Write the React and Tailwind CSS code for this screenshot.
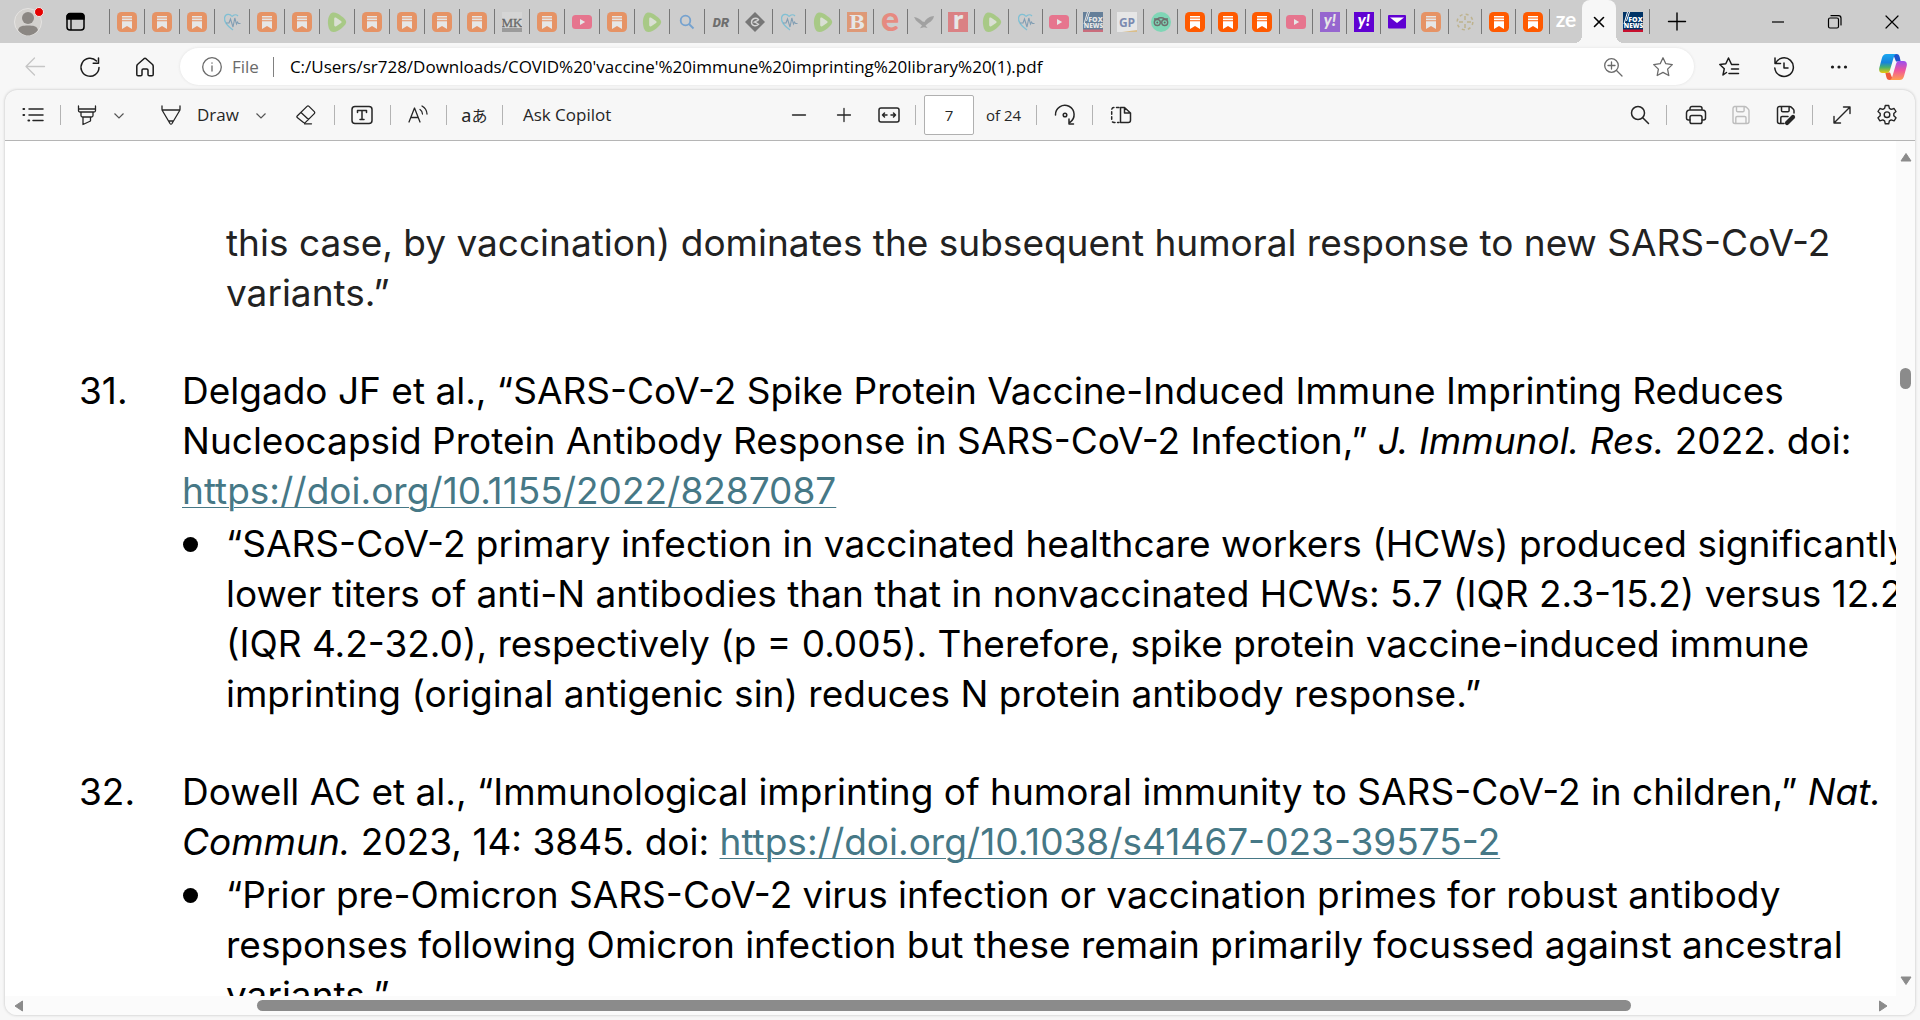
// ------------
// FAVICONS
// ------------

// orange bookmark favicon, used by most of the tabs
function BookmarkIcon() {
    return (
        <svg viewBox="0 0 20 20" className="w-5 h-5">
            <rect width="20" height="20" rx="4.5" fill="#ff5a00" />
            <path d="M5 4h10v1.6H5zM5 6.6h10v1.6H5zM5 9.2h10V17l-5-3-5 3z" fill="#fff" />
        </svg>
    )
}

function HeartIcon() {
    return (
        <svg viewBox="0 0 20 20" className="w-5 h-5" fill="none">
            <path d="M10 4.5C8 1.5 3.5 1.6 2.6 5.5 1.8 10 6 14.5 11 18M10 4.5c2-2 4.500-2 6-.5" stroke="#35b5dc" strokeWidth="1.2" />
            <path d="M4 11h3l1.500-4 2.500 8 1.800-9 1.700 6 1-2 1 1.500h2" stroke="#37709c" strokeWidth="1.1" />
        </svg>
    )
}

function PlayIcon() {
    return (
        <svg viewBox="0 0 20 20" className="w-5 h-5">
            <path d="M3 2.500C5-.8 9.500.3 13 3c3.500 2.700 7 5 6 8-1.200 3.500-8 8.600-12 9-4.500.2-5.500-4-6-8C.7 8.500 1.200 5 3 2.500z" fill="#85c742" />
            <path d="M7.200 6.800c0-1.200 1-1.700 2-1.100l4.800 3.200c.8.600.8 1.400 0 2l-4.800 3.300c-1 .6-2 .1-2-1.100z" fill="#e8f2dc" />
        </svg>
    )
}

function VideoIcon() {
    return (
        <svg viewBox="0 0 20 20" className="w-5 h-5">
            <rect y="3" width="20" height="14" rx="3.500" fill="#ff1f50" />
            <path d="M8 7v6l5.200-3z" fill="#fff" />
        </svg>
    )
}

function FoxIcon() {
    return (
        <svg viewBox="0 0 20 20" className="w-5 h-5">
            <rect width="20" height="20" fill="#003366" />
            <rect y="17.500" width="20" height="2.500" fill="#c8102e" />
            <path d="M1 12 4.500 0M3.500 9 6.500 0" stroke="#fff" strokeWidth="1" />
            <text x="12.500" y="9.500" textAnchor="middle" fontSize="7" fontWeight="800" fill="#fff" fontFamily="Open Sans, sans-serif">FOX</text>
            <text x="10.500" y="15.800" textAnchor="middle" fontSize="6.500" fontWeight="800" fill="#fff" fontFamily="Open Sans, sans-serif">NEWS</text>
        </svg>
    )
}

// favicon that is only a letter or two on a plain box
function LetterIcon({ text, bg, fill, size, font = "Lato, sans-serif", weight = 900, italic, y = 15.5 }) {
    return (
        <svg viewBox="0 0 20 20" className="w-5 h-5 overflow-visible">
            <rect width="20" height="20" fill={bg || "none"} />
            <text x="10" y={y} textAnchor="middle" fontSize={size} fontWeight={weight} fontStyle={italic ? "italic" : "normal"} fill={fill} fontFamily={font}>{text}</text>
        </svg>
    )
}

function Favicon({ kind }) {
    switch (kind) {
        case "bookmark": return <BookmarkIcon />
        case "heart": return <HeartIcon />
        case "play": return <PlayIcon />
        case "video": return <VideoIcon />
        case "fox": return <FoxIcon />
        case "mk":
            return (
                <svg viewBox="0 0 20 20" className="w-5 h-5">
                    <rect width="20" height="20" fill="#dedede" />
                    <rect y="16" width="20" height="4" fill="#6a6a6a" />
                    <text x="10" y="15" textAnchor="middle" fontSize="13" fill="#000" stroke="#000" strokeWidth=".3" fontFamily="Liberation Serif, serif">MK</text>
                </svg>
            )
        case "search":
            return (
                <svg viewBox="0 0 20 20" className="w-5 h-5" fill="none" stroke="#1f78d1" strokeWidth="1.800">
                    <circle cx="8.500" cy="8.500" r="4.800" />
                    <path d="m12 12 4.500 4.500" />
                </svg>
            )
        case "dr": return <LetterIcon text="DR" fill="#111" size="13" italic font="Roboto, sans-serif" y={14.5} />
        case "diamond":
            return (
                <svg viewBox="0 0 20 20" className="w-5 h-5">
                    <path d="m10 0 10 10-10 10L0 10z" fill="#222" />
                    <path d="M13.500 7.500C11 5 6.500 6.500 6.500 10.200c0 3.600 4.500 4.800 7 2.100-2-1-2.500-2-4-2.300 1.500-1 3.500-1 4-2.500z" fill="none" stroke="#ddd" strokeWidth="1.400" />
                </svg>
            )
        case "b": return <LetterIcon text="B" bg="#f06724" fill="#fff" size="19" font="DejaVu Serif, serif" y={17} />
        case "e": return <LetterIcon text="e" fill="#ff4a35" size="34" y={18.5} />
        case "eagle":
            return (
                <svg viewBox="0 0 20 20" className="w-5 h-5">
                    <path d="M0 5c3 .5 6 2 8.500 4.500l2 .5C12.500 6 16 4.500 20 4c-.5 3-2.500 5.500-5.500 7l-3 2.500 2 2.500-3.500-.8-4 1 2-2.700L5 11l-3-2.500z" fill="#777" />
                </svg>
            )
        case "r": return <LetterIcon text="r" bg="#e8383d" fill="#fff" size="27" y={17} />
        case "gp":
            return (
                <svg viewBox="0 0 20 20" className="w-5 h-5">
                    <rect width="20" height="20" fill="#fff" />
                    <path d="m5 20 15-2v2z" fill="#e8b04a" />
                    <text x="10" y="14.500" textAnchor="middle" fontSize="12" fontWeight="700" fill="#2b4a94" fontFamily="Open Sans, sans-serif">GP</text>
                </svg>
            )
        case "owl":
            return (
                <svg viewBox="0 0 20 20" className="w-5 h-5">
                    <circle cx="10" cy="10" r="10" fill="#34e0a1" />
                    <g fill="none" stroke="#111" strokeWidth="1.400">
                        <circle cx="6.300" cy="10.500" r="3" />
                        <circle cx="13.700" cy="10.500" r="3" />
                        <path d="M3 7h3c2.500-1.500 5.500-1.500 8 0h3" />
                    </g>
                    <circle cx="6.300" cy="10.500" r="1" />
                    <circle cx="13.700" cy="10.500" r="1" />
                </svg>
            )
        case "yahoo": return <LetterIcon text="y!" bg="#6001d2" fill="#fff" size="16" italic y={14} />
        case "mail":
            return (
                <svg viewBox="0 0 20 20" className="w-5 h-5">
                    <rect x="1" y="3" width="18" height="13.500" rx="1" fill="#6001d2" />
                    <path d="M3 5.500h14L10 11z" fill="#fff" />
                </svg>
            )
        case "dots":
            return (
                <svg viewBox="0 0 20 20" className="w-5 h-5" fill="none" stroke="#b09a50" strokeWidth="1.500">
                    <circle cx="10" cy="10" r="7.800" strokeDasharray="3 3.200" />
                    <path d="M10 4v4M10 12v4M4 10h4M12 10h4" />
                </svg>
            )
        case "ze": return <LetterIcon text="ze" fill="#fff" size="21" weight={700} y={15} />
        default: return null
    }
}

// second value is 1 when the tab is asleep
const tabs = [
    ["bookmark", 1], ["bookmark", 1], ["bookmark", 1], ["heart", 1], ["bookmark", 1], ["bookmark", 1],
    ["play", 1], ["bookmark", 1], ["bookmark", 1], ["bookmark", 1], ["bookmark", 1], ["mk", 1],
    ["bookmark", 1], ["video", 1], ["bookmark", 1], ["play", 1], ["search", 1],
]

const narrowTabs = [
    ["dr", 1], ["diamond", 1], ["heart", 1], ["play", 1], ["b", 1], ["e", 1], ["eagle", 1], ["r", 1],
    ["play", 1], ["heart", 1], ["video", 1], ["fox", 1], ["gp", 1], ["owl", 1], ["bookmark", 0],
    ["bookmark", 0], ["bookmark", 0], ["video", 1], ["yahoo", 1], ["yahoo", 0], ["mail", 0],
    ["bookmark", 1], ["dots", 1], ["bookmark", 0], ["bookmark", 0],
]

// ------------
// COMPONENTS
// ------------

function Tab({ kind, faded }) {
    return (
        <button aria-label={kind + " tab"} className="flex-1 h-[25px] border-l border-[#777] flex items-center justify-center">
            <span className={faded ? "opacity-50" : ""}><Favicon kind={kind} /></span>
        </button>
    )
}

// outline icon on a 20px grid, children are the strokes
function Line({ children, w = 1.3 }) {
    return (
        <svg viewBox="0 0 20 20" className="w-5 h-5 shrink-0 overflow-visible" fill="none" stroke="currentColor" strokeWidth={w} strokeLinecap="round" strokeLinejoin="round">
            {children}
        </svg>
    )
}

function IconButton({ label, className = "w-[45px]", children }) {
    return (
        <button aria-label={label} className={`flex items-center justify-center h-8 shrink-0 ${className}`}>
            {children}
        </button>
    )
}

function Divider({ className = "bg-[#b3b3b3]" }) {
    return <div className={`w-px h-5 shrink-0 ${className}`} />
}

function Chevron({ label }) {
    return (
        <button aria-label={label} className="w-3 h-8 flex items-center justify-center text-[#555]">
            <svg viewBox="0 0 12 12" className="w-3 h-3" fill="none" stroke="currentColor" strokeWidth="1.200"><path d="m1.500 4.500 4.500 4.500 4.500-4.500" /></svg>
        </button>
    )
}

function TabStrip() {
    return (
        <div className="h-[43px] bg-[#cdcdcd] flex items-center">
            <button aria-label="Profile" className="ml-3.5 w-7 h-7">
                <svg viewBox="0 0 28 28" className="w-7 h-7 overflow-visible">
                    <circle cx="14" cy="14" r="13.500" fill="#d3d1ce" stroke="#e6e4e2" />
                    <circle cx="14" cy="10" r="6" fill="#8b8783" />
                    <path d="M4 22c1-4 5-4.500 10-4.500s9 .5 10 4.500c-2 3-6 5.500-10 5.500S6 25 4 22z" fill="#8b8783" />
                    <circle cx="25" cy="4" r="4.500" fill="#e60000" stroke="#eee" />
                </svg>
            </button>
            <button aria-label="Tab actions" className="ml-6 mr-6 w-[19px] h-5">
                <svg viewBox="0 0 19 20" className="w-[19px] h-5">
                    <rect x="1" y="2" width="17" height="16" rx="3" fill="none" stroke="#000" strokeWidth="1.500" />
                    <path d="M1 7V4.500A3 3 0 0 1 4 1.500h11a3 3 0 0 1 3 3V7zM5 7v11" stroke="#000" strokeWidth="1.300" />
                </svg>
            </button>
            <div className="flex w-[595px] shrink-0">
                {tabs.map(([kind, faded], i) => <Tab key={i} kind={kind} faded={faded} />)}
            </div>
            <div className="flex w-[845px] shrink-0">
                {narrowTabs.map(([kind, faded], i) => <Tab key={i} kind={kind} faded={faded} />)}
            </div>
            <div className="w-[33px] shrink-0 flex">
                <Tab kind="ze" />
            </div>

            {/* active tab */}
            <div className="self-stretch flex items-end shrink-0">
                <button aria-label="Close tab" className="relative w-[34px] h-[43px] rounded-t-lg bg-[#f7f7f7] flex items-center justify-center">
                    <span className="absolute right-full bottom-0 w-2 h-2 bg-[radial-gradient(circle_at_0_0,#cdcdcd_8px,#f7f7f7_8px)]" />
                    <span className="absolute left-full bottom-0 w-2 h-2 bg-[radial-gradient(circle_at_100%_0,#cdcdcd_8px,#f7f7f7_8px)]" />
                    <Line w={1.6}><path d="m5.500 5.500 9 9M14.500 5.500l-9 9" /></Line>
                </button>
            </div>
            <div className="w-[34px] h-[25px] flex items-center justify-center border-r border-[#777] shrink-0"><FoxIcon /></div>
            <IconButton label="New tab" className="w-[54px]">
                <Line w={1.4}><path d="M1.500 9.500h17M10 1v17" /></Line>
            </IconButton>
            <div className="ml-auto flex">
                <IconButton label="Minimize" className="w-[57px]"><Line w={1.2}><path d="M4 10h12" strokeLinecap="butt" /></Line></IconButton>
                <IconButton label="Restore" className="w-[57px]">
                    <Line w={1.2}><rect x="3.500" y="6" width="10" height="10" rx="1.500" /><path d="M6 3.700h7.500a2.500 2.500 0 0 1 2.500 2.500V13" /></Line>
                </IconButton>
                <IconButton label="Close" className="w-[57px]"><Line w={1.2}><path d="m4 4 12 12M16 4 4 16" /></Line></IconButton>
            </div>
        </div>
    )
}

function AddressBar() {
    return (
        <div className="h-[47px] flex items-center text-[#1b1b1b]">
            <IconButton label="Back" className="ml-3 w-[46px] text-[#c6c6c6]"><Line><path d="M19.500 9.500H1M9.500 1 1 9.500 9.500 18" /></Line></IconButton>
            <IconButton label="Refresh" className="ml-2 w-[48px]"><Line w={1.5}><path d="M19 10.500A9 9 0 1 1 16.500 4M18.500 1v5.300h-5.300" /></Line></IconButton>
            <IconButton label="Home" className="ml-2 w-[46px]"><Line w={1.5}><path d="M1.800 9.200c0-.8.300-1.400.9-1.900L9 1.700c.6-.5 1.400-.5 2 0l6.300 5.600c.6.500.9 1.100.9 1.900v8.300c0 .8-.5 1.300-1.300 1.300h-2.600c-.8 0-1.300-.5-1.300-1.300v-4.300c0-.7-.5-1.200-1.200-1.200H8.200c-.7 0-1.200.5-1.200 1.200v4.300c0 .8-.5 1.300-1.300 1.300H3.100c-.8 0-1.300-.5-1.300-1.300z" /></Line></IconButton>
            <div className="ml-3 h-[37px] flex-1 min-w-0 rounded-full bg-white flex items-center pl-[22px] pr-1 shadow-[0_0_3px_#e0e0e0]">
                <button className="flex items-center gap-2.5 text-[#6a6a6a]">
                    <Line w={1.3}><circle cx="10" cy="10" r="9.300" /><path d="M10 9v5M10 5.800v.4" /></Line>
                    File
                </button>
                <Divider className="ml-3.5 mr-4 bg-[#808080]" />
                <input aria-label="Address" readOnly className="flex-1 min-w-0 text-black outline-none" defaultValue="C:/Users/sr728/Downloads/COVID%20'vaccine'%20immune%20imprinting%20library%20(1).pdf" />
                <IconButton label="Zoom" className="w-[46px] text-[#6a6a6a]"><Line w={1.3}><circle cx="8.500" cy="8.500" r="6.800" /><path d="m13.500 13.500 5.500 5.500M8.500 5v7M5 8.500h7" /></Line></IconButton>
                <IconButton label="Favorite" className="w-[54px] text-[#6a6a6a]"><Line w={1.3}><path d="m10 .8 2.800 5.900 6.500.9-4.700 4.500 1.200 6.400-5.800-3.100-5.800 3.100 1.200-6.400L.7 7.600l6.500-.9z" /></Line></IconButton>
            </div>
            <IconButton label="Favorites" className="ml-2 w-[54px]"><Line w={1.5}><path d="M7.500 15.500 4 18l1.300-6.300L.8 7.500l6-.8L9.500 1l2.700 5.700M12.500 7.500h7M12.500 12h7M10 16.500h9.500" /></Line></IconButton>
            <IconButton label="History" className="w-[56px]"><Line w={1.5}><path d="M1 1v5.500h5.500M1.500 6.500A9.300 9.300 0 1 1 .8 11M10 6v5h4" /></Line></IconButton>
            <IconButton label="More" className="w-[54px]">
                <svg viewBox="0 0 20 20" className="w-5 h-5" fill="#1b1b1b"><circle cx="3.500" cy="10" r="1.600" /><circle cx="10" cy="10" r="1.600" /><circle cx="16.500" cy="10" r="1.600" /></svg>
            </IconButton>
            <IconButton label="Copilot" className="w-[54px]">
                <svg viewBox="0 0 28 26" className="w-7 h-[26px]">
                    <defs>
                        <linearGradient id="cpA" x1="0" y1="0" x2="0" y2="1"><stop offset="0" stopColor="#1aa7f0" /><stop offset=".45" stopColor="#1683dc" /><stop offset=".7" stopColor="#48b06c" /><stop offset="1" stopColor="#ecc90c" /></linearGradient>
                        <linearGradient id="cpB" x1="0" y1="0" x2="0" y2="1"><stop offset="0" stopColor="#9a4ff0" /><stop offset=".5" stopColor="#f0569c" /><stop offset="1" stopColor="#ffa04f" /></linearGradient>
                    </defs>
                    <path d="M14 0h3.500c2 0 2.600 1 3.200 3l1 4.500H17z" fill="#2052cb" />
                    <path d="M14 26h-3.500c-2 0-2.600-1-3.200-3l-1-4.500H11z" fill="#ee5a3a" />
                    <path d="M7.500 0H18c-2 0-2.700 1.500-3.500 4L11 16c-.6 2-1.500 3-3.500 3H3.500C.5 19-.4 16.500.4 13.500l2.400-9C3.600 1.500 4.800 0 7.500 0z" fill="url(#cpA)" />
                    <path d="M20.500 26H10c2 0 2.700-1.500 3.500-4L17 10c.6-2 1.500-3 3.500-3h4c3 0 3.900 2.500 3.100 5.500l-2.400 9c-.8 3-2 4.500-4.700 4.500z" fill="url(#cpB)" />
                </svg>
            </IconButton>
        </div>
    )
}

function PdfToolbar() {
    return (
        <div className="h-[51px] border-b border-[#b5b5b5] grid grid-cols-[1fr_auto_1fr] items-center text-[#262626] shrink-0">
            {/* left tools */}
            <div className="flex items-center">
                <IconButton label="Contents" className="w-[55px]">
                    <Line w={1.5}><path d="M6 4h14M6 10h14M10 15.500h10" /><path d="M.5 4h.6M.5 10h.6M5.500 15.500h.6" strokeWidth="2.200" /></Line>
                </IconButton>
                <Divider />
                <IconButton label="Highlight" className="w-[52px]">
                    <Line><path d="M1.500 1v4.500c0 1 .6 1.500 1.500 1.500h14c.9 0 1.500-.5 1.500-1.500V1M1.500 4h17M4 7v3.500c0 1 .5 1.500 1.500 1.500h9c1 0 1.500-.5 1.500-1.500V7M6 12v7.500l7.500-3.500v-4" /></Line>
                </IconButton>
                <Chevron label="Highlight options" />
                <button className="ml-9 mr-4 flex items-center gap-4">
                    <Line><path d="M1 1v3c0 .8.200 1.300.6 2L9 18.500c.5.800 1.500.8 2 0L18.400 6c.4-.7.6-1.200.6-2V1M1 5h18M7.500 16h5" /></Line>
                    Draw
                </button>
                <Chevron label="Draw options" />
                <IconButton label="Erase" className="w-[67px] pl-3">
                    <Line><path d="m1.200 11 9.800-9.600c.6-.6 1.400-.6 2 0l5.300 5.200c.6.600.6 1.400 0 2L9.500 17.400c-.6.600-1.400.6-2 0l-6.300-4.800c-.5-.5-.5-1.100 0-1.600zM5 7.500l7.500 7M8.500 18.800h7" /></Line>
                </IconButton>
                <Divider />
                <IconButton label="Add text" className="w-[55px]">
                    <Line w={1.5}><rect x="0" y="1.500" width="20" height="17" rx="3" /><path d="M5.500 7.500V5.500h9v2M10 5.500v9M8 14.500h4" /></Line>
                </IconButton>
                <Divider />
                <IconButton label="Read aloud" className="w-[55px]">
                    <Line><path d="m1 17 5.500-14L12 17M3 12.500h7M12 4.500c1.500 1 2.500 2.500 2.500 4.500M14 1c3 1.700 4.800 4.500 5 8" /></Line>
                </IconButton>
                <Divider />
                <IconButton label="Translate" className="w-[55px]">
                    <span className="text-lg whitespace-nowrap font-['Noto_Sans','Noto_Sans_CJK_JP',sans-serif]">a<span className="text-base">あ</span></span>
                </IconButton>
                <Divider />
                <button className="ml-5 whitespace-nowrap">Ask Copilot</button>
            </div>

            {/* page controls */}
            <div className="flex items-center pl-1">
                <IconButton label="Zoom out"><Line><path d="M3.500 10h13" /></Line></IconButton>
                <IconButton label="Zoom in"><Line><path d="M3.500 10h13M10 3.500v13" /></Line></IconButton>
                <IconButton label="Fit to width">
                    <Line w={1.5}><rect x="0" y="3" width="20" height="14" rx="2" /><path d="M3.500 10H8M5.500 8l-2 2 2 2M12 10h4.500M14.500 8l2 2-2 2" /></Line>
                </IconButton>
                <Divider className="ml-1 mr-2 bg-[#b3b3b3]" />
                <input aria-label="Page number" defaultValue="7" className="w-[50px] h-10 text-center text-[15px] bg-white border border-[#b0b0b0] rounded-xs outline-none" />
                <span className="w-[62px] pl-3 text-[15px]">of 24</span>
                <Divider />
                <IconButton label="Rotate" className="w-[55px]">
                    <Line w={1.5}><path d="M.5 10a9.300 9.300 0 1 1 14.500 7.300M14 14v5M14 19h4.500" /><circle cx="10" cy="10" r="1.800" /></Line>
                </IconButton>
                <Divider />
                <IconButton label="Page view" className="w-[55px]">
                    <Line w={1.5}><path d="M8 2.500H3a2.300 2.300 0 0 0-2.300 2.300v10.400A2.300 2.300 0 0 0 3 17.500h5" strokeDasharray="2.500 2.600" /><path d="M9.500 2.500h4l6 5.500v7.200a2.300 2.300 0 0 1-2.300 2.300H9.500zM13.500 2.500V8h6" /></Line>
                </IconButton>
            </div>

            {/* right tools */}
            <div className="flex items-center justify-end pr-1.5">
                <IconButton label="Find"><Line w={1.5}><circle cx="8" cy="8" r="6.500" /><path d="m13 13 5.500 5.500" /></Line></IconButton>
                <Divider className="ml-1 mr-1.5 bg-[#b3b3b3]" />
                <IconButton label="Print">
                    <Line w={1.5}><path d="M4 15H2.500A2 2 0 0 1 .5 13V8a3 3 0 0 1 3-3h13a3 3 0 0 1 3 3v5a2 2 0 0 1-2 2H16M4 5V3.500A2 2 0 0 1 6 1.500h8a2 2 0 0 1 2 2V5" /><rect x="4" y="10.500" width="12" height="8" rx="1.800" /></Line>
                </IconButton>
                <IconButton label="Save" className="w-[45px] text-[#bdbdbd]">
                    <Line w={1.4}><path d="M3.500 1.500h10.200c.6 0 1 .2 1.500.6l2.200 2.200c.4.400.6.900.6 1.500v10.700a2 2 0 0 1-2 2h-12a2 2 0 0 1-2-2v-13a2 2 0 0 1 1.500-2zM5.500 1.500v4c0 .8.500 1.300 1.300 1.300h5c.8 0 1.300-.5 1.300-1.300v-4M4.800 18.500v-5.700c0-.8.500-1.300 1.300-1.300h7.600c.8 0 1.300.5 1.300 1.300v5.700" /></Line>
                </IconButton>
                <IconButton label="Save as">
                    <Line w={1.5}><path d="M8 18.500H3.500a2 2 0 0 1-2-2v-13a2 2 0 0 1 2-2h10.200c.6 0 1 .2 1.500.6l2.200 2.200c.4.400.6.900.6 1.500V8M5.500 1.500v4c0 .8.500 1.300 1.300 1.300h5c.8 0 1.300-.5 1.300-1.300v-4M4.800 18.500v-5.700c0-.8.500-1.300 1.300-1.300H12" /><path d="m11 18 6-6" strokeWidth="4.200" /></Line>
                </IconButton>
                <Divider className="ml-1 mr-1.5 bg-[#b3b3b3]" />
                <IconButton label="Full screen"><Line w={1.4}><path d="M2 18 18 2M11.500 2H18v6.500M2 11.500V18h6.500" /></Line></IconButton>
                <IconButton label="Settings">
                    <Line w={1.4}><path d="M8.300.5h3.400l.7 2.900 1.800 1 2.900-.9 1.900 3-2.200 2v2.200l2.200 2.100-1.900 3-2.900-.9-1.800 1-.7 2.900H8.300l-.7-2.900-1.800-1-2.900.9-1.900-3 2.200-2.100V8.500L1 6.500l1.900-3 2.900.9 1.800-1z" /><circle cx="10" cy="9.700" r="2.800" /></Line>
                </IconButton>
            </div>
        </div>
    )
}

// numbered reference, then its quote with a bullet
function Reference({ number, children, quote }) {
    return (
        <li className="mt-12">
            <div className="flex">
                <span className="w-[103px] shrink-0">{number}.</span>
                <p>{children}</p>
            </div>
            <div className="mt-[3px] pl-[103px] flex">
                <span className="w-[15px] h-[15px] mt-[18px] ml-px mr-7 rounded-full bg-black shrink-0" />
                <p>{quote}</p>
            </div>
        </li>
    )
}

function DocLink({ url }) {
    return <a href={url} className="text-[#467886] underline decoration-1 underline-offset-3">{url}</a>
}

function Arrow({ label, d }) {
    return (
        <button aria-label={label} className="w-[19px] h-[19px] shrink-0 flex items-center justify-center">
            <svg viewBox="0 0 12 12" className="w-3 h-3"><path d={d} fill="#8b8b8b" stroke="#8b8b8b" strokeLinejoin="round" /></svg>
        </button>
    )
}

// ------------
// App
// ------------
export default function App() {
    return (
        <div className="h-screen flex flex-col overflow-hidden bg-[#f7f7f7] text-[17px] font-['Open_Sans',sans-serif]">
            <TabStrip />
            <AddressBar />

            {/* pdf viewer */}
            <div className="flex-1 min-h-0 mx-[5px] mb-[5px] flex flex-col rounded-xl overflow-hidden shadow-[0_0_3px_#bbb]">
                <PdfToolbar />
                <div className="flex-1 min-h-0 flex bg-white">
                    <div className="flex-1 min-w-0 overflow-hidden pl-[74px] pt-[77px] whitespace-nowrap text-black text-[37px] leading-[50px] font-['Inter',sans-serif]">
                        <p className="pl-[147px] text-[#222]">
                            this case, by vaccination) dominates the subsequent humoral response to new SARS-CoV-2<br />
                            variants.”
                        </p>
                        <ol>
                            <Reference
                                number={31}
                                quote={<>
                                    “SARS-CoV-2 primary infection in vaccinated healthcare workers (HCWs) produced significantly<br />
                                    lower titers of anti-N antibodies than that in nonvaccinated HCWs: 5.7 (IQR 2.3-15.2) versus 12.2<br />
                                    (IQR 4.2-32.0), respectively (p = 0.005). Therefore, spike protein vaccine-induced immune<br />
                                    imprinting (original antigenic sin) reduces N protein antibody response.”
                                </>}
                            >
                                Delgado JF et al., “SARS-CoV-2 Spike Protein Vaccine-Induced Immune Imprinting Reduces<br />
                                Nucleocapsid Protein Antibody Response in SARS-CoV-2 Infection,” <i>J. Immunol. Res.</i> 2022. doi:<br />
                                <DocLink url="https://doi.org/10.1155/2022/8287087" />
                            </Reference>
                            <Reference
                                number={32}
                                quote={<>
                                    “Prior pre-Omicron SARS-CoV-2 virus infection or vaccination primes for robust antibody<br />
                                    responses following Omicron infection but these remain primarily focussed against ancestral<br />
                                    variants.”
                                </>}
                            >
                                Dowell AC et al., “Immunological imprinting of humoral immunity to SARS-CoV-2 in children,” <i>Nat.</i><br />
                                <i>Commun.</i> 2023, 14: 3845. doi: <DocLink url="https://doi.org/10.1038/s41467-023-39575-2" />
                            </Reference>
                        </ol>
                    </div>

                    {/* vertical scrollbar */}
                    <div className="w-[19px] shrink-0 bg-[#fbfbfb] flex flex-col items-center pt-1.5 pb-1.5">
                        <Arrow label="Scroll up" d="M6 2.500 1 10h10z" />
                        <div className="h-[24%] w-full" />
                        <div className="w-[11px] h-[21px] rounded-full bg-[#8b8b8b]" />
                        <div className="flex-1" />
                        <Arrow label="Scroll down" d="M1 2h10L6 9.500z" />
                    </div>
                </div>

                {/* horizontal scrollbar */}
                <div className="h-[19px] shrink-0 bg-[#fbfbfb] flex items-center pl-1 pr-[23px]">
                    <Arrow label="Scroll left" d="M9.500 1v10L2 6z" />
                    <div className="flex-1 flex">
                        <div className="w-[12.400%]" />
                        <div className="w-[74.500%] h-[11px] rounded-full bg-[#8b8b8b]" />
                    </div>
                    <Arrow label="Scroll right" d="M2.500 1v10L10 6z" />
                </div>
            </div>
        </div>
    )
}
